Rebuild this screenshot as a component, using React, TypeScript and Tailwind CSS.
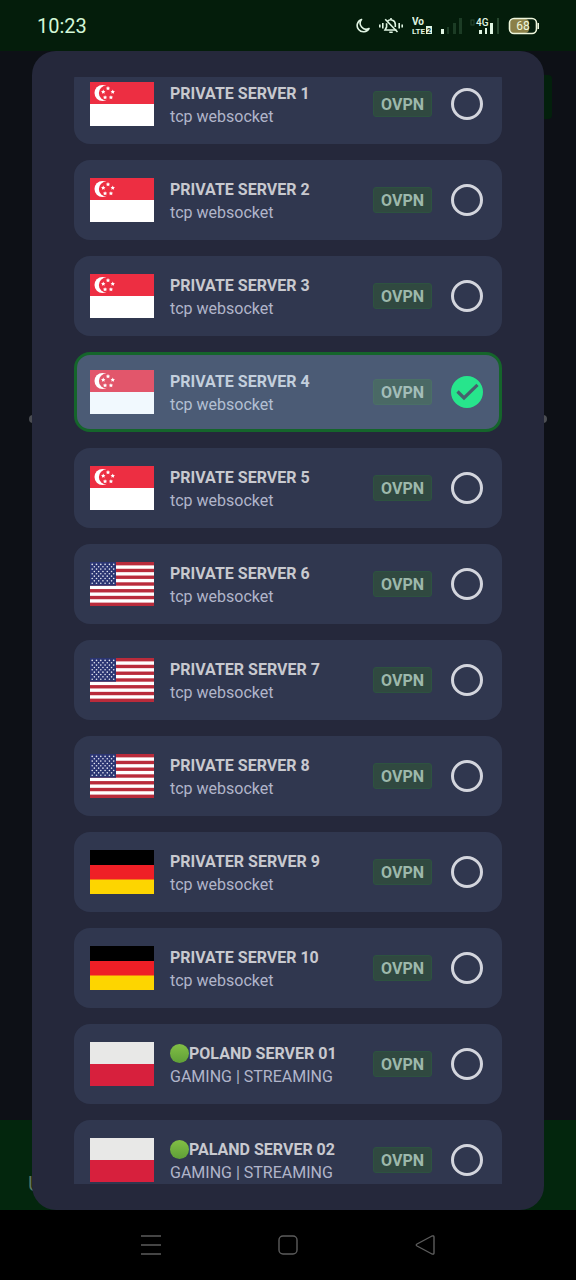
import { useState } from "react";
import clsx from "clsx";

type Country = "sg" | "us" | "de" | "pl";

type Server = {
  id: number;
  name: string;
  detail: string;
  country: Country;
  online?: boolean;
};

const servers: Server[] = [
  { id: 1, name: "PRIVATE SERVER 1", detail: "tcp websocket", country: "sg" },
  { id: 2, name: "PRIVATE SERVER 2", detail: "tcp websocket", country: "sg" },
  { id: 3, name: "PRIVATE SERVER 3", detail: "tcp websocket", country: "sg" },
  { id: 4, name: "PRIVATE SERVER 4", detail: "tcp websocket", country: "sg" },
  { id: 5, name: "PRIVATE SERVER 5", detail: "tcp websocket", country: "sg" },
  { id: 6, name: "PRIVATE SERVER 6", detail: "tcp websocket", country: "us" },
  { id: 7, name: "PRIVATER SERVER 7", detail: "tcp websocket", country: "us" },
  { id: 8, name: "PRIVATE SERVER 8", detail: "tcp websocket", country: "us" },
  { id: 9, name: "PRIVATER SERVER 9", detail: "tcp websocket", country: "de" },
  { id: 10, name: "PRIVATE SERVER 10", detail: "tcp websocket", country: "de" },
  { id: 11, name: "POLAND SERVER 01", detail: "GAMING | STREAMING", country: "pl", online: true },
  { id: 12, name: "PALAND SERVER 02", detail: "GAMING | STREAMING", country: "pl", online: true },
];

const starPoints = (cx: number, cy: number, r: number) =>
  Array.from({ length: 10 }, (_, i) => {
    const radius = i % 2 === 0 ? r : r * 0.5;
    const angle = (Math.PI / 5) * i - Math.PI / 2;
    return `${cx + radius * Math.cos(angle)},${cy + radius * Math.sin(angle)}`;
  }).join(" ");

const Singapore = ({ selected }: { selected: boolean }) => {
  const red = selected ? "#e2566b" : "#ed2e42";
  return (
    <>
      <rect width="64" height="44" fill={selected ? "#f1f9fe" : "#ffffff"} />
      <rect width="64" height="22" fill={red} />
      <circle cx="12.5" cy="11" r="8" fill="#fff" />
      <circle cx="16.5" cy="11" r="7.6" fill={red} />
      {[0, 1, 2, 3, 4].map((i) => {
        const a = (Math.PI * 2 * i) / 5 - Math.PI / 2;
        return (
          <polygon key={i} points={starPoints(18 + 5 * Math.cos(a), 11.4 + 5 * Math.sin(a), 2.3)} fill="#fff" />
        );
      })}
    </>
  );
};

const Usa = () => (
  <>
    <rect width="64" height="44" fill="#fff" />
    {[0, 1, 2, 3, 4, 5, 6].map((i) => (
      <rect key={i} y={(i * 88) / 13} width="64" height={44 / 13} fill="#b92b3b" />
    ))}
    <rect width="26" height={(44 * 7) / 13} fill="#2b3572" />
    {Array.from({ length: 9 }, (_, row) =>
      Array.from({ length: row % 2 === 0 ? 6 : 5 }, (_, col) => (
        <circle
          key={`${row}-${col}`}
          cx={2.2 + col * 4.3 + (row % 2) * 2.15}
          cy={2.4 + row * 2.35}
          r="0.8"
          fill="#e4e6f2"
        />
      ))
    )}
  </>
);

const Germany = () => (
  <>
    <rect width="64" height="15" fill="#000" />
    <rect y="15" width="64" height="15" fill="#ef1f26" />
    <rect y="29.5" width="64" height="14.5" fill="#fdd500" />
  </>
);

const Poland = () => (
  <>
    <rect width="64" height="22" fill="#e8e8e7" />
    <rect y="22" width="64" height="22" fill="#d7203d" />
  </>
);

const Flag = ({ country, selected }: { country: Country; selected: boolean }) => (
  <svg viewBox="0 0 64 44" className="h-11 w-16 shrink-0" aria-hidden="true">
    {country === "sg" && <Singapore selected={selected} />}
    {country === "us" && <Usa />}
    {country === "de" && <Germany />}
    {country === "pl" && <Poland />}
  </svg>
);

type ServerCardProps = {
  server: Server;
  selected: boolean;
  onSelect: (id: number) => void;
};

const ServerCard = ({ server, selected, onSelect }: ServerCardProps) => (
  <label
    className={clsx(
      "flex h-20 cursor-pointer items-center gap-4 rounded-2xl border-[3px] pl-[13px] pr-4",
      selected ? "border-[#15652b] bg-[#4b5b75]" : "border-transparent bg-[#30374f]"
    )}
  >
    <Flag country={server.country} selected={selected} />
    <span className="flex min-w-0 flex-1 flex-col pt-0.5 text-base leading-[23px]">
      <span
        className={clsx("flex items-center font-bold", selected ? "text-[#c3cfdd]" : "text-[#c8c9cf]")}
      >
        {server.online && (
          <span className="size-[19px] rounded-full bg-linear-to-b from-[#82bf45] to-[#5f9f38]" />
        )}
        {server.name}
      </span>
      <span className={selected ? "text-[#b3c0d3]" : "text-[#b1b5ca]"}>{server.detail}</span>
    </span>
    <span
      className={clsx(
        "flex h-[26px] items-center rounded-[3px] border px-[7px] pt-0.5 text-base font-bold",
        selected
          ? "border-[#4a6f66] bg-[#4a6965] text-[#a3bdb9]"
          : "border-[#2d5240] bg-[#304940] text-[#9db8ab]"
      )}
    >
      OVPN
    </span>
    <span className="relative ml-[3px] size-8 shrink-0">
      <input
        type="radio"
        name="server"
        checked={selected}
        onChange={() => onSelect(server.id)}
        className="block size-8 appearance-none rounded-full border-[3px] border-[#d3d5dd] checked:border-[#27e58c] checked:bg-[#27e58c]"
      />
      {selected && (
        <svg viewBox="0 0 32 32" className="pointer-events-none absolute inset-0 size-8" aria-hidden="true">
          <path d="M6.500 15.500 13 22 26.500 8.800" fill="none" stroke="#47606d" strokeWidth="3.2" />
        </svg>
      )}
    </span>
  </label>
);

const MoonIcon = () => (
  <svg viewBox="0 0 14 18" className="h-[18px] w-3.5" aria-hidden="true">
    <path
      d="M5.500 2.500A6.300 6.300 0 1 0 13 11.500 6 6 0 0 1 5.500 2.500Z"
      fill="none"
      stroke="#e0f5e3"
      strokeWidth="1.6"
      strokeLinejoin="round"
    />
  </svg>
);

const MutedBellIcon = () => (
  <svg viewBox="0 0 26 18" className="h-[18px] w-[26px]" fill="none" stroke="#e0f5e3" strokeWidth="1.6" aria-hidden="true">
    <path d="M1.800 7.500v3M4.800 6v5.500M21.200 6v5.500M24.200 7.500v3" />
    <path d="M9.500 4.300A4.500 4.500 0 0 1 17.300 7.500V10M8.600 6.300V10L7 13h11.500M13 1v2M11.300 15.300h3.400" />
    <path d="M7.200 2.200 19.500 15" />
  </svg>
);

const VolteIcon = () => (
  <svg viewBox="0 0 20 20" className="h-5 w-5" fill="#e0f5e3" aria-label="VoLTE 2">
    <text x="0" y="9" fontSize="10" fontWeight="700">Vo</text>
    <text x="0" y="18" fontSize="8" fontWeight="700">LTE</text>
    <rect x="14" y="10" width="6" height="8" />
    <text x="15" y="17" fontSize="7" fontWeight="700" fill="#041d0b">2</text>
  </svg>
);

const SignalIcon = () => (
  <svg viewBox="0 0 22 18" className="h-[18px] w-[22px]" aria-hidden="true">
    <rect x="1" y="12" width="3" height="5" fill="#e0f5e3" />
    <rect x="7" y="10" width="2" height="7" fill="#1c3c25" />
    <rect x="13" y="6" width="3" height="11" fill="#1c3c25" />
    <rect x="19" y="1" width="3" height="16" fill="#1c3c25" />
  </svg>
);

const MobileDataIcon = () => (
  <svg viewBox="0 0 30 18" className="h-[18px] w-[30px]" aria-label="4G">
    <rect x="1" y="3" width="3" height="5" fill="none" stroke="#26462e" />
    <text x="6" y="9" fontSize="10" fontWeight="500" fill="#e0f5e3">4G</text>
    <rect x="9" y="13" width="3" height="4" fill="#e0f5e3" />
    <rect x="15" y="11" width="2" height="6" fill="#e0f5e3" />
    <rect x="20" y="6" width="3" height="11" fill="#e0f5e3" />
    <rect x="27" y="1" width="2" height="16" fill="#26462e" />
  </svg>
);

const BatteryIcon = () => (
  <svg viewBox="0 0 32 18" className="h-[18px] w-8" aria-label="Battery 68 percent">
    <rect x="2" y="2" width="19" height="14" rx="4" fill="#8b8048" />
    <rect x="1.5" y="1.5" width="27" height="15" rx="4.5" fill="none" stroke="#eef6dc" strokeWidth="1.6" />
    <rect x="29.5" y="6" width="1.5" height="6" fill="#eef6dc" />
    <text x="15" y="13" fontSize="12" textAnchor="middle" fill="#eef6dc">68</text>
  </svg>
);

const StatusBar = () => (
  <header className="flex h-[51px] shrink-0 items-center justify-between bg-[#041d0b] pl-[37px] pr-9">
    <time className="text-xl text-[#d3f7d7]">10:23</time>
    <div className="flex items-center gap-2">
      <MoonIcon />
      <MutedBellIcon />
      <VolteIcon />
      <SignalIcon />
      <MobileDataIcon />
      <BatteryIcon />
    </div>
  </header>
);

const NavBar = () => (
  <nav className="flex h-[70px] shrink-0 items-center justify-around bg-black px-[82px] text-[#5c5c5c]">
    <button type="button" aria-label="Recent apps">
      <svg viewBox="0 0 20 20" className="size-5" stroke="currentColor" strokeWidth="1.5">
        <path d="M0 1h20M0 10h20M0 19h20" />
      </svg>
    </button>
    <button type="button" aria-label="Home">
      <svg viewBox="0 0 20 20" className="size-5" fill="none" stroke="currentColor" strokeWidth="1.4">
        <rect x="1" y="1" width="18" height="18" rx="4" />
      </svg>
    </button>
    <button type="button" aria-label="Back">
      <svg
        viewBox="0 0 20 20"
        className="size-5"
        fill="none"
        stroke="currentColor"
        strokeWidth="1.4"
        strokeLinejoin="round"
      >
        <path d="M17 1 2 9Q0.500 10 2 11L17 19Q19 19.500 19 18V2Q19 0.500 17 1Z" />
      </svg>
    </button>
  </nav>
);

// Dimmed home screen, only its edges show around the dialog
const DimmedPage = () => (
  <div className="flex h-full flex-col justify-between bg-[#0d1016]" aria-hidden="true">
    <div className="flex justify-end px-6 pt-6">
      <div className="h-11 w-24 rounded bg-[#03200c]" />
    </div>
    <div className="flex grow items-center justify-between px-[29px] pb-[402px]">
      <span className="size-2 rounded-full bg-[#4b4d52]" />
      <span className="size-2 rounded-full bg-[#4b4d52]" />
    </div>
    <div className="flex h-[90px] items-end bg-[#03260d] px-7 pb-3 text-xl text-[#5d7562]">U</div>
  </div>
);

const App = () => {
  const [selectedId, setSelectedId] = useState(4);

  return (
    <div className="flex h-screen flex-col bg-black font-[Roboto,sans-serif]">
      <StatusBar />
      <main className="relative min-h-0 flex-1">
        <DimmedPage />
        <div
          role="dialog"
          aria-label="Select server"
          className="absolute inset-x-8 inset-y-0 flex flex-col rounded-3xl bg-[#25283b] px-[42px] py-[26px]"
        >
          <div className="min-h-0 flex-1 overflow-y-auto [scrollbar-width:none]">
            <ul className="-mt-[13px] flex flex-col gap-4">
              {servers.map((server) => (
                <li key={server.id}>
                  <ServerCard
                    server={server}
                    selected={server.id === selectedId}
                    onSelect={setSelectedId}
                  />
                </li>
              ))}
            </ul>
          </div>
        </div>
      </main>
      <NavBar />
    </div>
  );
};

export default App;
